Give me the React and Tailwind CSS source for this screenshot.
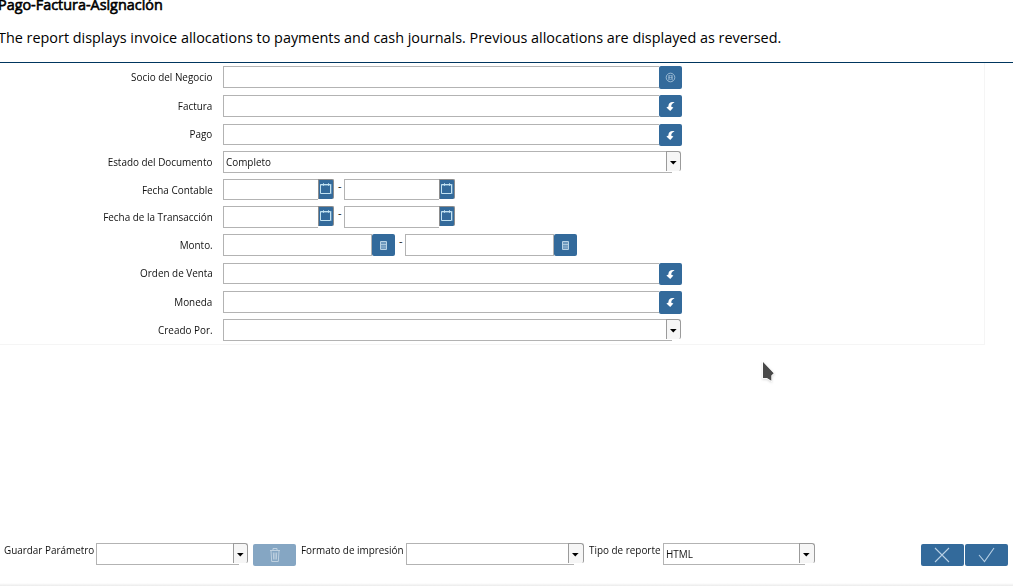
import React from "react";

const label = "font-['Open_Sans',sans-serif] text-[11px] whitespace-nowrap text-[#111]";

function Text({ className = "", children }) {
  return <span className={`inline-block scale-x-[0.9] ${className}`}>{children}</span>;
}

function Box({ className = "", children }) {
  return <div className={`box-border shrink-0 border border-[#b3b3b3] bg-white ${className}`}>{children}</div>;
}

function ArrowIcon() {
  return (
    <svg width="23" height="22" viewBox="0 0 23 22" fill="#fff">
      <path d="M15.6 7.2C11.4 6.4 9.2 8.7 9.4 11.4L7.4 12.4L11.2 16L14.4 12.6L12.3 11.7C12.1 9.9 13 8.5 15.6 7.2Z" />
    </svg>
  );
}

function PartnerIcon() {
  return (
    <svg width="23" height="23" viewBox="0 0 23 23" fill="none" stroke="#b4cde1" strokeWidth="0.8">
      <circle cx="11.5" cy="11.5" r="4.3" />
      <path d="M9.5 14.5V9.5H13.5V14.5M10.5 9.5V13.5H12.5V9.5M9.5 11.5H13.5" opacity="0.6" />
    </svg>
  );
}

function CalcIcon() {
  return (
    <svg width="23" height="22" viewBox="0 0 23 22" fill="none">
      <rect x="8" y="8" width="6" height="7" fill="#6f99bd" />
      <path d="M8.5 7.5H14.5V15.5H8.5Z" stroke="#b9d2e4" />
      <path d="M9 10.5H14" stroke="#b9d2e4" opacity="0.8" />
      <path d="M9 13H14" stroke="#a2c0d8" strokeWidth="0.6" />
    </svg>
  );
}

function CalendarButton() {
  return (
    <div className="h-5 w-4 shrink-0 rounded-r-[2px] border-t border-r border-l border-[#8d8d8d] bg-[#336a9b]">
      <svg width="14" height="19" viewBox="0 0 14 19" fill="none" stroke="#c2e2f2">
        <path d="M1.5 4.5H11.5V13.5H1.5Z" />
        <path d="M1 5H12M4.5 3V6M9.5 3V6" opacity="0.75" />
        <path d="M12.5 4V14" opacity="0.3" />
      </svg>
    </div>
  );
}

function Button({ className = "", color = "bg-[#336a9b]", children }) {
  return (
    <div className={`flex shrink-0 items-start justify-center overflow-hidden rounded-[2px] ${color} ${className}`}>
      {children}
    </div>
  );
}

function Lookup({ box, btn, partner }) {
  return (
    <div className="flex items-start">
      <Box className={`w-[436px] border-r-0 ${box}`} />
      <Button className={`w-[23px] ${btn}`}>{partner ? <PartnerIcon /> : <ArrowIcon />}</Button>
    </div>
  );
}

function Combo({ width, value, leading = "leading-[20px]", arrow = "w-[15px]" }) {
  return (
    <div className={`flex h-[22px] shrink-0 items-start ${width}`}>
      <div className={`h-[22px] min-w-0 flex-1 border border-r-0 border-[#b3b3b3] bg-white pl-[2px] ${label} ${leading}`}>
        <Text className="origin-left">{value}</Text>
      </div>
      <div className={`h-[22px] shrink-0 ${arrow}`}>
        <div className="h-5 rounded-tr-[3px] rounded-br-[2px] border-t border-r border-l border-[#9b9b9b] bg-[#f6f6f6]">
          <svg width="13" height="19" viewBox="0 0 13 19">
            <path d="M3 9H9.6L6.3 12.4Z" fill="#000" />
          </svg>
        </div>
        <div className="h-[2px] w-[6px] border-b border-[#b3b3b3]" />
      </div>
    </div>
  );
}

function Dash() {
  return <div className="w-[10px] shrink-0 pl-1 font-['Open_Sans',sans-serif] text-[11px] leading-[14px] text-[#111]">-</div>;
}

function DateRange({ box }) {
  return (
    <div className="flex items-start">
      <Box className={`w-[95px] border-r-0 ${box}`} />
      <CalendarButton />
      <Dash />
      <Box className={`w-[95px] border-r-0 ${box}`} />
      <CalendarButton />
    </div>
  );
}

function AmountRange() {
  return (
    <div className="flex items-start">
      <Box className="h-[22px] w-[149px]" />
      <Button className="h-[22px] w-[23px]"><CalcIcon /></Button>
      <Dash />
      <Box className="h-[22px] w-[149px]" />
      <Button className="h-[22px] w-[23px]"><CalcIcon /></Button>
    </div>
  );
}

function Row({ text, height, leading = "leading-[22px]", children }) {
  return (
    <div className={`flex items-start ${height}`}>
      <div className={`w-[212.5px] shrink-0 text-right ${label} ${leading}`}>
        <Text className="origin-right">{text}</Text>
      </div>
      <div className="pl-[10.5px]">{children}</div>
    </div>
  );
}

export default function App() {
  return (
    <div className="relative flex h-[586px] w-[1013px] flex-col overflow-hidden bg-white">
      <header className="h-[63px] shrink-0 border-b border-[#00365f] font-['Open_Sans',sans-serif] text-black">
        <div className="-mt-[5px] -ml-[2px] h-5 text-[14.4px] leading-5 whitespace-nowrap [-webkit-text-stroke:0.6px_#000]">Pago-Factura-Asignación</div>
        <div className="mt-[13px] -ml-[2px] h-5 text-[14.4px] leading-5 whitespace-nowrap">
          The report displays invoice allocations to payments and cash journals. Previous allocations are displayed as reversed.
        </div>
      </header>

      <main className="h-[282px] w-[985px] shrink-0 border-r border-b border-[#f5f5f5] pt-[3px]">
        <Row text="Socio del Negocio" height="h-[29px]"><Lookup box="h-[22px]" btn="h-[23px]" partner /></Row>
        <Row text="Factura" height="h-[29px]"><Lookup box="h-[22px]" btn="h-[22px]" /></Row>
        <Row text="Pago" height="h-[27px]" leading="leading-[20px]"><Lookup box="h-[21px]" btn="h-[22px]" /></Row>
        <Row text="Estado del Documento" height="h-[28px]"><Combo width="w-[458px]" value="Completo" /></Row>
        <Row text="Fecha Contable" height="h-[27px]"><DateRange box="h-[21px]" /></Row>
        <Row text="Fecha de la Transacción" height="h-[28px]"><DateRange box="h-[22px]" /></Row>
        <Row text="Monto." height="h-[29px]"><AmountRange /></Row>
        <Row text="Orden de Venta" height="h-[28px]" leading="leading-[20px]"><Lookup box="h-[21px]" btn="h-[22px]" /></Row>
        <Row text="Moneda" height="h-[28px]"><Lookup box="h-[22px]" btn="h-[23px]" /></Row>
        <Row text="Creado Por." height="h-[22px]"><Combo width="w-[458px]" value="" /></Row>
      </main>

      <footer className="mt-[198px] flex h-[40px] shrink-0 items-start pl-[3px]">
        <div className={`-mt-[4px] w-[93px] shrink-0 pl-[0.5px] leading-[22px] ${label}`}><Text className="origin-left">Guardar Parámetro</Text></div>
        <Combo width="w-[152px]" value="" />
        <Button className="mt-px ml-[5px] h-[22px] w-[43px]" color="bg-[#85a6c3]">
          <svg width="43" height="22" viewBox="0 0 43 22" fill="none" stroke="#bfd1e0">
            <path d="M17 6.5H27M20 6V4.5H24V6M18 7L18.7 17.5H25.3L26 7M20.3 8.5L20.7 15.5M22 8.5V15.5M23.7 8.5L23.3 15.5" />
          </svg>
        </Button>
        <div className={`-mt-[4px] ml-[4px] w-[106px] shrink-0 pl-[0.5px] leading-[22px] ${label}`}><Text className="origin-left">Formato de impresión</Text></div>
        <Combo width="w-[178px]" value="" arrow="w-[16px]" />
        <div className={`-mt-[4px] ml-[4px] w-[75px] shrink-0 pl-[0.5px] leading-[22px] ${label}`}><Text className="origin-left">Tipo de reporte</Text></div>
        <Combo width="w-[152px]" value="HTML" arrow="w-[16px]" />
        <Button className="mt-px ml-[106px] h-[22px] w-[43px]">
          <svg width="43" height="22" viewBox="0 0 43 22" fill="none" stroke="#b7cfe4" strokeWidth="1.1">
            <path d="M14 4L28 18M28 4L14 18" />
          </svg>
        </Button>
        <Button className="mt-px ml-px h-[22px] w-[43px]">
          <svg width="43" height="22" viewBox="0 0 43 22" fill="none" stroke="#b7cfe4" strokeWidth="1.1">
            <path d="M14 11L19.5 17.5L29 4" />
          </svg>
        </Button>
      </footer>
      <div className="mt-auto h-[5px] shrink-0 bg-linear-to-b from-white to-[#dedede]" />

      <svg className="absolute top-[358px] left-[758px] drop-shadow-[0_1px_1px_rgba(0,0,0,0.15)]" width="20" height="28" viewBox="0 0 20 28">
        <path d="M5 4L15.7 15.3L13.3 17.5V22.7L9 20H5Z" fill="#484848" stroke="#fff" strokeWidth="1.5" paintOrder="stroke" />
      </svg>
    </div>
  );
}
